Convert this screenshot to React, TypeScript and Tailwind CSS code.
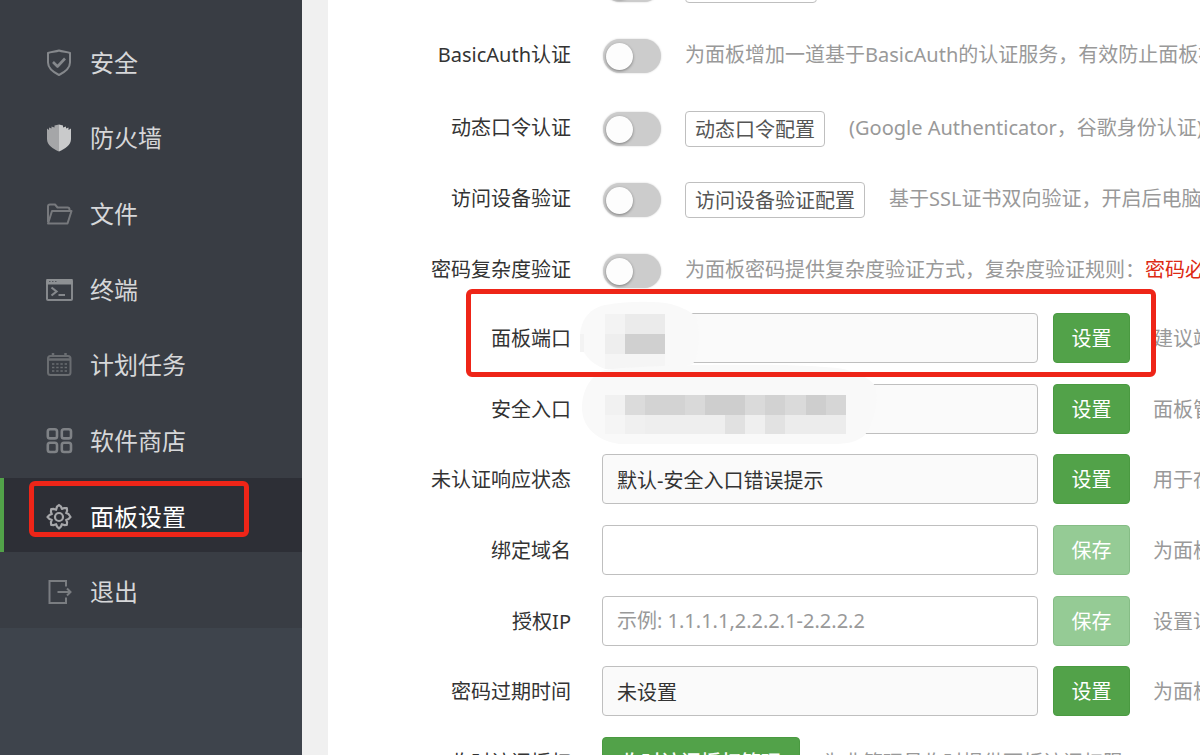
import React from 'react';
import { clsx } from 'clsx';

type IconName = 'shield' | 'wall' | 'folder' | 'terminal' | 'calendar' | 'apps' | 'gear' | 'exit';

interface MenuItem {
  icon: IconName;
  label: string;
  active?: boolean;
}

interface SwitchRowProps {
  id: string;
  label: string;
  action?: string;
  hint?: React.ReactNode;
  className?: string;
}

interface FieldRowProps {
  id: string;
  label: string;
  value?: string;
  placeholder?: string;
  editable?: boolean;
  hint: string;
  mask?: React.ReactNode;
  marked?: boolean;
}

const MENU: MenuItem[] = [
  { icon: 'shield', label: '安全' },
  { icon: 'wall', label: '防火墙' },
  { icon: 'folder', label: '文件' },
  { icon: 'terminal', label: '终端' },
  { icon: 'calendar', label: '计划任务' },
  { icon: 'apps', label: '软件商店' },
  { icon: 'gear', label: '面板设置', active: true },
  { icon: 'exit', label: '退出' },
];

const ICONS: Record<IconName, React.ReactNode> = {
  shield: (
    <g stroke="#85888c" strokeWidth="2" strokeLinejoin="round">
      <path d="M14 1.500C11 2.600 6 3 3 4v9.500c0 5.500 5 9.500 11 12.500 6-3 11-7 11-12.500V4c-3-1-8-1.400-11-2.500z" />
      <path d="M8 13l4.500 4.500L20 9.500" strokeWidth="2.600" />
    </g>
  ),
  wall: (
    <g>
      <path
        d="M2 4.500l2 1.500V3.500l2.500 1V2.500l3 1V1.500l4.500-1v27C8 25 2 21 2 15z"
        fill="#a5a6a8"
      />
      <path
        d="M14 .5l4 1v2l3-1v2l2.500-1V6l2.500-1.500V15c0 6-6 10-12 12.500z"
        fill="#c9cacb"
      />
    </g>
  ),
  folder: (
    <g stroke="#77797d" strokeWidth="2" strokeLinejoin="round">
      <path d="M3 22V6.500C3 5 4 4.500 5 4.500h5l2.500 3h10c1.500 0 2 .8 2 2V11" />
      <path d="M3 23.500l4-12.500h19.500l-4 12.500z" />
    </g>
  ),
  terminal: (
    <g>
      <rect x="2" y="4" width="25" height="20" rx="1" stroke="#85888c" strokeWidth="2" />
      <path d="M1.500 3h26v5.500h-26z" fill="#8d9093" />
      <path d="M4 5.500h1.500M7 5.500h1.500M10 5.500h1.500" stroke="#55585e" strokeWidth="1.200" />
      <path d="M6.500 11.500l5 4-5 4M13.500 19h6.500" stroke="#85888c" strokeWidth="2.200" />
    </g>
  ),
  calendar: (
    <g stroke="#6a6d71" strokeWidth="2">
      <rect x="3" y="5" width="22.500" height="19" rx="2.500" />
      <path d="M3 8.500h22.500" strokeWidth="2.500" />
      <path d="M8 2v4M20.500 2v4" strokeWidth="2.500" />
      <path d="M7 13h15M7 16.500h15M7 20h15" strokeDasharray="2.400 1.800" strokeWidth="1.600" />
    </g>
  ),
  apps: (
    <g stroke="#7f8286" strokeWidth="2.600">
      <rect x="2.800" y="2.200" width="9.200" height="9.200" rx="2.200" />
      <rect x="16.800" y="2.200" width="9.200" height="9.200" rx="2.200" />
      <rect x="2.800" y="15.800" width="9.200" height="9.200" rx="2.200" />
      <rect x="16.800" y="15.800" width="9.200" height="9.200" rx="2.200" />
    </g>
  ),
  gear: (
    <g stroke="#a6a7aa" strokeWidth="2.200" strokeLinejoin="round">
      <path d="M12 3.600L14 2l2 1.600.9 2.300 2.300-.9 2.600.2.300 2.600-.9 2.300 2.300.9L25.500 14l-2 2-2.300.9.900 2.300-.3 2.600-2.600.3-2.300-.9-.9 2.300L14 25.500 12 23.500l-.9-2.300-2.300.9-2.600-.3-.3-2.600.9-2.300L4.500 16l-2-2 2-2 2.300-.9-.9-2.300.3-2.600 2.600-.3 2.300.9z" />
      <circle cx="14" cy="14" r="4" />
    </g>
  ),
  exit: (
    <g stroke="#7a7d81" strokeWidth="2">
      <path d="M21 8.500V3H4.500v22H21v-5.500" />
      <path d="M12.500 14H26M22 10.500l3.500 3.500-3.500 3.500" />
    </g>
  ),
};

// [x, y, width, height, fill]
type Cell = [number, number, number, number, string];

const PORT_CELLS: Cell[] = [
  [26, 13, 20, 20, '#f3f3f3'],
  [46, 13, 40, 20, '#ebebeb'],
  [1, 33, 4, 18, '#f3f3f3'],
  [26, 33, 20, 20, '#eeeeee'],
  [46, 33, 40, 20, '#d0d0d0'],
  [26, 53, 60, 15, '#f5f5f5'],
];

const ENTRY_CELLS: Cell[] = [
  [26, 31, 20, 20, '#f1f1f1'],
  [46, 31, 20, 20, '#dbdbdb'],
  [66, 31, 40, 20, '#d3d3d3'],
  [106, 31, 20, 20, '#d9d9d9'],
  [126, 31, 40, 20, '#cecece'],
  [166, 31, 20, 20, '#dadada'],
  [186, 31, 20, 20, '#d2d2d2'],
  [206, 31, 21, 20, '#dadada'],
  [227, 31, 20, 20, '#cecece'],
  [247, 31, 20, 20, '#d6d6d6'],
  [26, 51, 20, 19, '#f5f5f5'],
  [46, 51, 20, 19, '#f0f0f0'],
  [66, 51, 80, 19, '#eeeeee'],
  [146, 51, 20, 19, '#e1e1e1'],
  [166, 51, 20, 19, '#efefef'],
  [186, 51, 20, 19, '#e2e2e2'],
  [206, 51, 61, 19, '#ececec'],
];

const Mosaic: React.FC<{ width: number; height: number; blob: string; cells: Cell[] }> = ({
  width,
  height,
  blob,
  cells,
}) => (
  <svg width={width} height={height} viewBox={`0 0 ${width} ${height}`} fill="none" aria-hidden="true">
    <path d={blob} fill="#f9f9f9" />
    {cells.map(([x, y, w, h, fill]) => (
      <rect key={`${x}-${y}`} x={x} y={y} width={w} height={h} fill={fill} />
    ))}
  </svg>
);

const Hint: React.FC<{ children: React.ReactNode }> = ({ children }) => (
  <span className="shrink-0 whitespace-nowrap text-[#999999]">{children}</span>
);

const SwitchRow: React.FC<SwitchRowProps> = ({ id, label, action, hint, className }) => (
  <div className={clsx('flex h-9 items-center', className)}>
    <label htmlFor={id} className="mr-8 w-[243px] shrink-0 pb-0.5 text-right">
      {label}
    </label>
    <input
      id={id}
      type="checkbox"
      role="switch"
      className="mr-6 flex h-[34px] w-[58px] shrink-0 appearance-none items-center rounded-full bg-[#cccccc] px-[3px] shadow-[0_0_2px_#cccccc] before:h-[27px] before:w-[27px] before:rounded-full before:bg-[#fdfdfd] before:shadow-[0_1px_3px_rgba(0,0,0,0.4)] checked:justify-end checked:bg-[#52a249]"
    />
    {action && (
      <button
        type="button"
        className="mr-6 h-9 shrink-0 whitespace-nowrap rounded border border-[#bfbfbf] bg-white px-[9px] pt-0.5 text-[#555555]"
      >
        {action}
      </button>
    )}
    {hint && (
      <div className="pb-0.5">
        <Hint>{hint}</Hint>
      </div>
    )}
  </div>
);

const FieldRow: React.FC<FieldRowProps> = ({
  id,
  label,
  value,
  placeholder,
  editable = false,
  hint,
  mask,
  marked = false,
}) => (
  <div className="relative flex items-center">
    <label htmlFor={id} className="mr-[31px] w-[243px] shrink-0 pt-0.5 text-right">
      {label}
    </label>
    <div className="relative mr-[15px] w-[436px] shrink-0">
      <input
        id={id}
        type="text"
        defaultValue={value}
        placeholder={placeholder}
        readOnly={!editable}
        className={clsx(
          'h-[50px] w-full rounded-sm border border-[#bfbfbf] px-3.5 outline-none placeholder:text-[#999999]',
          editable ? 'bg-white' : 'bg-[#fafafa]'
        )}
      />
      {mask}
    </div>
    <button
      type="button"
      disabled={editable}
      className={clsx(
        'mr-[23px] h-[50px] w-[77px] shrink-0 rounded border pt-0.5 text-white',
        editable ? 'border-[#86bd86] bg-[#95cb95]' : 'border-[#4a9a41] bg-[#52a249]'
      )}
    >
      {editable ? '保存' : '设置'}
    </button>
    <div className="pt-0.5">
      <Hint>{hint}</Hint>
    </div>
    {marked && (
      <div className="pointer-events-none absolute -top-6 left-[138px] z-10 h-[88px] w-[690px] rounded-md border-[5px] border-[#ee2518]" />
    )}
  </div>
);

const Sidebar: React.FC = () => (
  <aside className="w-[302px] shrink-0 bg-[#3e444c]">
    <nav className="bg-[#393d44] pt-6">
      <ul className="flex h-[604px] flex-col gap-px">
        {MENU.map(({ icon, label, active }) => (
          <li key={label} className="relative flex-1">
            <a
              href="#"
              className={clsx(
                'flex h-full items-center gap-[17px] border-l-4 pl-[41px] pt-[3px] text-2xl',
                active
                  ? 'border-[#52a249] bg-[#2d2f36] text-white'
                  : 'border-transparent text-[#d6d7d9]'
              )}
            >
              <svg width="28" height="28" viewBox="0 0 28 28" fill="none" aria-hidden="true">
                {ICONS[icon]}
              </svg>
              <span>{label}</span>
            </a>
            {active && (
              <div className="pointer-events-none absolute left-[29px] top-[3px] h-14 w-[220px] rounded-md border-[5px] border-[#ee2518]" />
            )}
          </li>
        ))}
      </ul>
    </nav>
  </aside>
);

const App: React.FC = () => (
  <div className="flex h-screen overflow-hidden bg-[#f0f0f0] font-['Noto_Sans','Noto_Sans_CJK_SC',sans-serif] text-xl leading-7 text-[#333333]">
    <Sidebar />
    <main className="ml-[26px] min-w-0 flex-1 overflow-hidden bg-white">
      {/* The list is scrolled, so the first row only shows its lower edge */}
      <form className="-mt-[33px]">
        <div className="flex flex-col gap-[35px]">
          <SwitchRow id="ssl" label="面板SSL" action="面板SSL配置" />
          <SwitchRow
            id="basic-auth"
            label="BasicAuth认证"
            hint="为面板增加一道基于BasicAuth的认证服务，有效防止面板被扫描"
          />
          <SwitchRow
            id="otp"
            label="动态口令认证"
            action="动态口令配置"
            hint="(Google Authenticator，谷歌身份认证)"
            className="mt-0.5"
          />
          <SwitchRow
            id="device"
            label="访问设备验证"
            action="访问设备验证配置"
            hint="基于SSL证书双向验证，开启后电脑需安装证书"
          />
          <SwitchRow
            id="complexity"
            label="密码复杂度验证"
            hint={
              <>
                为面板密码提供复杂度验证方式，复杂度验证规则：
                <span className="text-[#dd2a14]">密码必须满足</span>
              </>
            }
          />
        </div>

        <div className="mt-6 flex h-[474px] flex-col justify-between">
          <FieldRow
            id="port"
            label="面板端口"
            hint="建议端口范围"
            marked
            mask={
              <div className="absolute -left-[23px] -top-3">
                <Mosaic
                  width={120}
                  height={70}
                  blob="M26 4C50 0 76 0 92 3c10 3 16 6 22 10 5 6 6 12 6 22 0 12-2 20-6 28-18 6-62 6-88 5C10 62 1 50 1 36 1 22 8 8 26 4z"
                  cells={PORT_CELLS}
                />
              </div>
            }
          />
          <FieldRow
            id="entry"
            label="安全入口"
            hint="面板管理入口"
            mask={
              <div className="absolute -left-[23px] -top-5">
                <Mosaic
                  width={300}
                  height={82}
                  blob="M26 6C60 0 240-2 268 6c18 6 24 10 28 16 4 10 2 30-10 49-8 7-18 9-32 9H40C14 76 3 60 3 44 3 28 10 12 26 6z"
                  cells={ENTRY_CELLS}
                />
              </div>
            }
          />
          <FieldRow id="status" label="未认证响应状态" value="默认-安全入口错误提示" hint="用于在未登录" />
          <FieldRow id="domain" label="绑定域名" editable hint="为面板绑定" />
          <FieldRow
            id="ip"
            label="授权IP"
            editable
            placeholder="示例: 1.1.1.1,2.2.2.1-2.2.2.2"
            hint="设置访问授权"
          />
          <FieldRow id="expire" label="密码过期时间" value="未设置" hint="为面板密码" />
          <div className="flex items-center">
            <span className="mr-[31px] w-[243px] shrink-0 pt-0.5 text-right">临时访问授权</span>
            <button
              type="button"
              className="mr-[23px] h-[50px] w-[198px] shrink-0 rounded border border-[#4a9a41] bg-[#52a249] pt-0.5 font-medium text-white"
            >
              临时访问授权管理
            </button>
            <div className="pt-0.5">
              <Hint>为非管理员临时提供面板访问权限</Hint>
            </div>
          </div>
        </div>
      </form>
    </main>
  </div>
);

export default App;
